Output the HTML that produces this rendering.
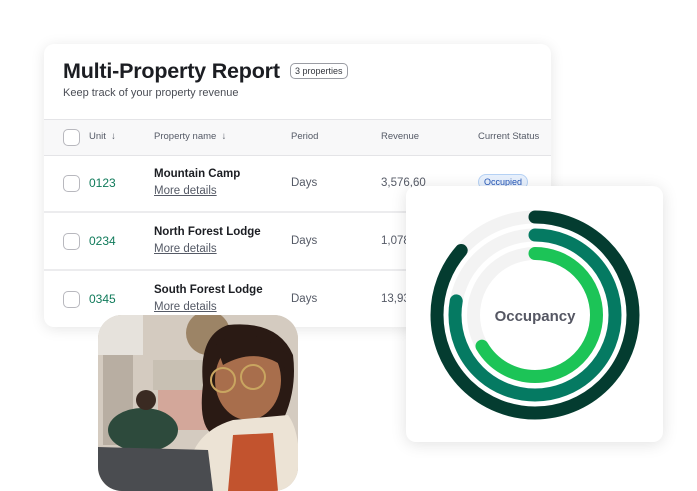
<!DOCTYPE html><html><head><style>
body{margin:0;width:697px;height:491px;background:#fff;position:relative;overflow:hidden;font-family:"Liberation Sans",Arial,sans-serif;}
.card{position:absolute;left:44px;top:44px;width:507px;height:283px;background:#fff;border-radius:10px;box-shadow:0 2px 14px rgba(0,0,0,.1);overflow:hidden}
.t{position:absolute;white-space:nowrap}
.cb{position:absolute;left:19px;width:15px;height:15px;border:1.3px solid #b8b8be;border-radius:5px;background:#fff}
.hdr{position:absolute;left:0;top:75px;width:507px;height:35px;background:#f8f8f9;border-top:1px solid #e4e4e7;border-bottom:1px solid #e4e4e7}
.h{font-size:9.5px;color:#555a66}
.u{font-size:12px;color:#0f7a5a}
.n{font-size:11.5px;color:#1b1d22;font-weight:bold}
.m{font-size:11.5px;color:#555a66;text-decoration:underline}
.d{font-size:11.5px;color:#555a66}
.sep{position:absolute;left:0;width:507px;height:2px;background:#ececee}
</style></head><body>
<div class="card">
<div class="t" style="left:19px;top:15px;font-size:21.5px;letter-spacing:-0.2px;font-weight:bold;color:#1b1d22">Multi-Property Report</div>
<div class="t" style="left:246px;top:19px;font-size:9px;color:#33363d;border:1px solid #9a9ca3;border-radius:5px;padding:2px 4px;background:#fff">3 properties</div>
<div class="t" style="left:19px;top:43px;font-size:11px;color:#4a4d55">Keep track of your property revenue</div>
<div class="hdr">
<div class="cb" style="top:9px"></div>
<div class="t h" style="left:45px;top:11px">Unit&nbsp; ↓</div>
<div class="t h" style="left:110px;top:11px">Property name&nbsp; ↓</div>
<div class="t h" style="left:247px;top:11px">Period</div>
<div class="t h" style="left:337px;top:11px">Revenue</div>
<div class="t h" style="left:434px;top:11px">Current Status</div>
</div>
<div class="cb" style="top:131px"></div><div class="t u" style="left:45px;top:132px">0123</div>
<div class="t n" style="left:110px;top:124px">Mountain Camp</div><div class="t m" style="left:110px;top:141px">More details</div>
<div class="t d" style="left:247px;top:133px">Days</div><div class="t d" style="left:337px;top:133px">3,576,60</div>
<div class="t" style="left:434px;top:130px;font-size:9px;color:#2456b8;background:#e8f1fd;border:1px solid #b6d2f5;border-radius:8px;padding:2px 5px">Occupied</div>
<div class="sep" style="top:167px"></div>
<div class="cb" style="top:189px"></div><div class="t u" style="left:45px;top:190px">0234</div>
<div class="t n" style="left:110px;top:182px">North Forest Lodge</div><div class="t m" style="left:110px;top:199px">More details</div>
<div class="t d" style="left:247px;top:191px">Days</div><div class="t d" style="left:337px;top:191px">1,078</div>
<div class="sep" style="top:225px"></div>
<div class="cb" style="top:247px"></div><div class="t u" style="left:45px;top:248px">0345</div>
<div class="t n" style="left:110px;top:240px">South Forest Lodge</div><div class="t m" style="left:110px;top:257px">More details</div>
<div class="t d" style="left:247px;top:249px">Days</div><div class="t d" style="left:337px;top:249px">13,93</div>
</div>

<div style="position:absolute;left:406px;top:186px;width:257px;height:256px;background:#fff;border-radius:10px;box-shadow:0 2px 16px rgba(0,0,0,.12)">
<svg width="257" height="256" viewBox="0 0 257 256">
<g transform="translate(129,129)" fill="none" stroke-width="13" stroke-linecap="round">
<circle r="98" stroke="#f3f3f3"/><circle r="80" stroke="#f3f3f3"/><circle r="61.5" stroke="#f3f3f3"/>
<g transform="rotate(-90)">
<circle r="98" stroke="#043c30" stroke-dasharray="532 1000"/>
<circle r="80" stroke="#057a62" stroke-dasharray="391 1000"/>
<circle r="61.5" stroke="#1cc457" stroke-dasharray="257 1000"/>
</g></g>
<text x="129" y="135" text-anchor="middle" font-family="Liberation Sans,sans-serif" font-size="15" font-weight="bold" fill="#555763">Occupancy</text>
</svg></div>

<div style="position:absolute;left:98px;top:315px;width:200px;height:176px;border-radius:24px;overflow:hidden;background:#cfc6bb">
<svg width="200" height="176" viewBox="0 0 200 176">
<rect width="200" height="176" fill="#d4cbc0"/>
<rect x="0" y="0" width="45" height="40" fill="#e6e2dc"/>
<circle cx="110" cy="18" r="22" fill="#9c8466"/>
<rect x="5" y="40" width="30" height="90" fill="#b8aea2"/>
<rect x="55" y="45" width="50" height="30" fill="#c8c0b3"/>
<rect x="60" y="75" width="55" height="40" fill="#d3a79a"/>
<ellipse cx="45" cy="115" rx="35" ry="22" fill="#2d4a3c"/>
<circle cx="48" cy="85" r="10" fill="#3a2a22"/>
<path d="M130 10 Q100 20 105 70 Q100 110 115 120 L180 115 Q200 80 195 40 Q180 5 130 10Z" fill="#2a1a14"/>
<ellipse cx="150" cy="65" rx="33" ry="40" fill="#a86e4c"/>
<path d="M118 30 Q150 5 190 40 L190 55 Q160 30 125 50Z" fill="#2a1a14"/>
<circle cx="125" cy="65" r="12" fill="none" stroke="#c9a560" stroke-width="2"/>
<circle cx="155" cy="62" r="12" fill="none" stroke="#c9a560" stroke-width="2"/>
<path d="M90 176 Q85 120 135 105 L190 100 Q205 120 200 176Z" fill="#ece3d5"/>
<path d="M135 120 L175 118 L180 176 L130 176Z" fill="#c2532e"/>
<path d="M0 132 L110 135 L115 176 L0 176Z" fill="#4a4c50"/>
</svg></div>
</body></html>
